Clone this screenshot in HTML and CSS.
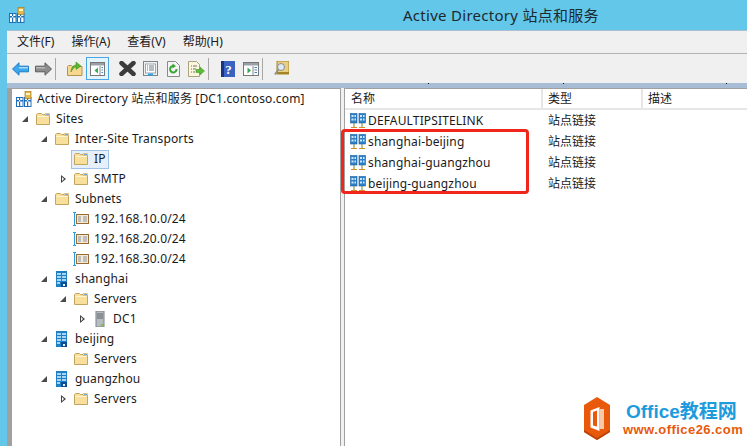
FILE: index.html
```html
<!DOCTYPE html>
<html lang="zh-CN">
<head>
<meta charset="utf-8">
<title>Active Directory 站点和服务</title>
<link rel="stylesheet" href="styles.css">
</head>
<body>
<svg class="defs" width="0" height="0">
  <symbol id="folder" viewBox="0 0 16 16">
    <path d="M1.500 13.500V3.500l1-1h4l1 1h6l1 1v9z" fill="#f9df9c" stroke="#c4a55f"/>
    <path d="M2.500 5.500h11" stroke="#fff4d2"/>
    <path d="M10 2.500h4.500v2H10z" fill="#fdf6df" stroke="#c4a55f" stroke-width=".6"/>
    <path d="M11 3.500h3" stroke="#6aa9dd"/>
  </symbol>
  <symbol id="site" viewBox="0 0 16 16">
    <rect x="2" y="0" width="11" height="16" fill="#1f7fc4"/>
    <path d="M3 2h4v2H3zM8 2h4v2H8zM3 5h4v2H3zM8 5h4v2H8zM3 8h4v2H3zM8 8h4v2H8z" fill="#a6d6f5"/>
    <rect x="7" y="11" width="6" height="5" fill="#0c4e96"/>
    <rect x="3" y="11" width="3" height="2" fill="#a6d6f5"/>
    <rect x="9" y="13" width="2" height="2" fill="#e8f4fc"/>
  </symbol>
  <symbol id="subnet" viewBox="0 0 16 16">
    <path d="M1.500 1v14M0 1.500h3M0 14.500h3" stroke="#2b9be0" fill="none"/>
    <rect x="3.500" y="3.500" width="12" height="9" fill="#f4e9d4" stroke="#9a6a33"/>
    <path d="M5 6h3M5 8h3M5 10h3M10 6h4M10 8h4M10 10h4" stroke="#8793a6"/>
  </symbol>
  <symbol id="server" viewBox="0 0 16 16">
    <rect x="4" y="0" width="8" height="16" fill="#b7bcc1" stroke="#7d8287"/>
    <path d="M5 3h6M5 5h6M5 7h6" stroke="#5f6468"/>
    <rect x="9" y="13" width="2" height="2" fill="#7cc242"/>
  </symbol>
  <symbol id="link" viewBox="0 0 16 16">
    <rect x="0.500" y="0.500" width="6.500" height="9.500" fill="#2d7fc6" stroke="#1c5fa3" stroke-width=".6"/>
    <rect x="9" y="0.500" width="6.500" height="9.500" fill="#2d7fc6" stroke="#1c5fa3" stroke-width=".6"/>
    <path d="M1.500 2h2v2h-2zM4.500 2h1.500v2H4.500zM1.500 5.500h2v2h-2zM4.500 5.500h1.500v2H4.500zM10 2h2v2h-2zM13 2h1.500v2H13zM10 5.500h2v2h-2zM13 5.500h1.500v2H13z" fill="#cfe9fb"/>
    <path d="M4 10v4M12 10v4" stroke="#6c8a2e"/>
    <path d="M1 14.500h6M9 14.500h6" stroke="#d78a22"/>
  </symbol>
  <symbol id="ad" viewBox="0 0 16 16">
    <rect x=".5" y="6.500" width="6.500" height="9" fill="#fff" stroke="#1f6fbe"/>
    <rect x="8.500" y="6.500" width="6.500" height="9" fill="#fff" stroke="#1f6fbe"/>
    <path d="M1 9h6v1.500H1zM9 9h6v1.500H9zM3 7v8h1.200V7zM11 7v8h1.200V7z" fill="#1f6fbe"/>
    <rect x="9" y="0.500" width="6" height="7" fill="#e3b94f" stroke="#a67c21" stroke-width=".7"/>
    <rect x="10" y="2" width="4" height="2" fill="#fff3c4"/>
  </symbol>
</svg>

<div class="titlebar">
  <svg class="title-icon" width="16" height="16"><use href="#ad"/></svg>
  <span class="title-text">Active Directory 站点和服务</span>
</div>

<div class="window">
  <nav class="menubar">
    <span>文件(F)</span><span>操作(A)</span><span>查看(V)</span><span>帮助(H)</span>
  </nav>

  <div class="toolbar">
    <span class="tool"><svg width="17" height="14" viewBox="0 0 17 14"><path d="M.5 7 7 .8v3.400h9.500v5.600H7v3.400z" fill="#3ea6ec" stroke="#1d7cc4"/><path d="M7 5h9v1.500H7z" fill="#a5dcfa"/></svg></span>
    <span class="tool"><svg width="17" height="14" viewBox="0 0 17 14"><path d="M16.500 7 10 .8v3.400H.5v5.600H10v3.400z" fill="#8c8c8c" stroke="#5c5c5c"/><path d="M1 5h9v1.500H1z" fill="#b8b8b8"/></svg></span>
    <span class="sep"></span>
    <span class="tool"><svg width="16" height="15" viewBox="0 0 16 15"><path d="M.5 14.500V5.500l1-1h3l1 1h9.500v9z" fill="#f6d98f" stroke="#b5934a"/><path d="M4 11C4 6 7 4 9 4V1l5 4-5 3.500V6C7 6 5.500 8 4 11z" fill="#58b52f" stroke="#3a8a1c" stroke-width=".5"/></svg></span>
    <span class="tool active"><svg width="15" height="14" viewBox="0 0 15 14"><rect x=".5" y=".5" width="14" height="13" fill="#fff" stroke="#777"/><path d="M1 1h13v2.500H1z" fill="#9aa0a6"/><path d="M10 4v9" stroke="#888"/><path d="M11.500 5.500h1.500M11.500 8h1.500M11.500 10.500h1.500" stroke="#3d7fc4"/><path d="M8 5.500v6L4.500 8.500z" fill="#35a853"/></svg></span>
    <span class="tool gap"><svg width="17" height="15" viewBox="0 0 17 15"><path d="M2.500 2 14.500 13M14.500 2 2.500 13" stroke="#3c3c3c" stroke-width="4.500" stroke-linecap="round"/></svg></span>
    <span class="tool"><svg width="15" height="15" viewBox="0 0 15 15"><rect x=".5" y=".5" width="14" height="14" fill="#eef1f4" stroke="#7e8388"/><rect x="2.500" y="3" width="10" height="9" fill="#fff" stroke="#a0a5aa"/><path d="M4 5h1M6 5h5M4 7h1M6 7h5M4 9h1M6 9h5" stroke="#6b7b8c"/><path d="M5 13.500h5" stroke="#2ba3e6" stroke-width="2"/></svg></span>
    <span class="tool"><svg width="13" height="16" viewBox="0 0 13 16"><path d="M.5.5h8l4 4v11H.5z" fill="#f5f5f5" stroke="#8a8a8a"/><path d="M9.500 8A3.200 3.200 0 1 1 6.500 5" fill="none" stroke="#3aa537" stroke-width="2"/><path d="M5.500 2.500 9 5 5.500 7.500z" fill="#3aa537"/></svg></span>
    <span class="tool"><svg width="17" height="16" viewBox="0 0 17 16"><path d="M.5.5h8l3 3v12H.5z" fill="#fbf6dd" stroke="#a9a27c"/><path d="M3 5h1M5 5h4M3 8h1M5 8h3M3 11h1M5 11h2" stroke="#6e6e6e"/><path d="M8 8.500h4V6l4.500 4-4.500 4v-2.500H8z" fill="#5cbb3a" stroke="#3d8e22" stroke-width=".5"/></svg></span>
    <span class="sep"></span>
    <span class="tool"><svg width="14" height="16" viewBox="0 0 14 16"><rect width="14" height="16" fill="#3a62c0"/><rect x="0" y="0" width="3" height="16" fill="#1a3580"/><text x="7.500" y="13" class="help-mark">?</text></svg></span>
    <span class="tool"><svg width="16" height="14" viewBox="0 0 16 14"><rect x=".5" y=".5" width="15" height="13" fill="#fff" stroke="#777"/><path d="M1 1h14v2.500H1z" fill="#9aa0a6"/><path d="M10 4v9" stroke="#888"/><path d="M11.500 5.500h2.500M11.500 8h2.500M11.500 10.500h2.500" stroke="#3d7fc4"/><path d="M4.500 5.500v6L8 8.500z" fill="#35a853"/></svg></span>
    <span class="sep"></span>
    <span class="tool"><svg width="15" height="15" viewBox="0 0 15 15"><rect x="3" y="0" width="12" height="13" fill="#e9cf83" stroke="#a58428"/><rect x="3" y="11" width="12" height="2" fill="#a58428"/><circle cx="7" cy="6" r="3.500" fill="#dfeaf2" stroke="#8c8c8c"/><path d="M4.500 8.500.8 13.500" stroke="#8c8c8c" stroke-width="1.600"/></svg></span>
  </div>

  <div class="band"></div>

  <div class="panes">
    <div class="tree">
      <div class="row l0"><svg class="ico"><use href="#ad"/></svg><span>Active Directory 站点和服务 [DC1.contoso.com]</span></div>
      <div class="row l1"><i class="arrow open"></i><svg class="ico"><use href="#folder"/></svg><span>Sites</span></div>
      <div class="row l2"><i class="arrow open"></i><svg class="ico"><use href="#folder"/></svg><span>Inter-Site Transports</span></div>
      <div class="row l3"><i class="arrow"></i><span class="sel"><svg class="ico"><use href="#folder"/></svg><span>IP</span></span></div>
      <div class="row l3"><i class="arrow closed"></i><svg class="ico"><use href="#folder"/></svg><span>SMTP</span></div>
      <div class="row l2"><i class="arrow open"></i><svg class="ico"><use href="#folder"/></svg><span>Subnets</span></div>
      <div class="row l3"><i class="arrow"></i><svg class="ico"><use href="#subnet"/></svg><span>192.168.10.0/24</span></div>
      <div class="row l3"><i class="arrow"></i><svg class="ico"><use href="#subnet"/></svg><span>192.168.20.0/24</span></div>
      <div class="row l3"><i class="arrow"></i><svg class="ico"><use href="#subnet"/></svg><span>192.168.30.0/24</span></div>
      <div class="row l2"><i class="arrow open"></i><svg class="ico"><use href="#site"/></svg><span>shanghai</span></div>
      <div class="row l3"><i class="arrow open"></i><svg class="ico"><use href="#folder"/></svg><span>Servers</span></div>
      <div class="row l4"><i class="arrow closed"></i><svg class="ico"><use href="#server"/></svg><span>DC1</span></div>
      <div class="row l2"><i class="arrow open"></i><svg class="ico"><use href="#site"/></svg><span>beijing</span></div>
      <div class="row l3"><i class="arrow"></i><svg class="ico"><use href="#folder"/></svg><span>Servers</span></div>
      <div class="row l2"><i class="arrow open"></i><svg class="ico"><use href="#site"/></svg><span>guangzhou</span></div>
      <div class="row l3"><i class="arrow closed"></i><svg class="ico"><use href="#folder"/></svg><span>Servers</span></div>
    </div>

    <div class="list">
      <div class="list-head">
        <span class="col-name">名称</span><span class="col-type">类型</span><span class="col-desc">描述</span>
      </div>
      <div class="list-row"><span class="col-name"><svg class="ico"><use href="#link"/></svg>DEFAULTIPSITELINK</span><span class="col-type">站点链接</span></div>
      <div class="list-row"><span class="col-name"><svg class="ico"><use href="#link"/></svg>shanghai-beijing</span><span class="col-type">站点链接</span></div>
      <div class="list-row"><span class="col-name"><svg class="ico"><use href="#link"/></svg>shanghai-guangzhou</span><span class="col-type">站点链接</span></div>
      <div class="list-row"><span class="col-name"><svg class="ico"><use href="#link"/></svg>beijing-guangzhou</span><span class="col-type">站点链接</span></div>
      <div class="highlight"></div>
    </div>
  </div>
</div>

<div class="watermark">
  <svg class="wm-logo" width="26" height="43" viewBox="0 0 26 43">
    <path d="M13 0 26 8v27l-13 8L0 35V8z" fill="#e8590c"/>
    <path d="M26 35l-13 8L0 35v-2l13 8 13-8z" fill="#b8430a"/>
    <path d="M6.500 13.500 15.500 10v24l-9-3.500z M9 15v13.500l4 1V13.500z" fill="#fff" fill-rule="evenodd"/>
    <path d="M15.500 12h4.500v20h-4.500z" fill="#f9c8a6"/>
  </svg>
  <div class="wm-text">
    <span class="wm-main">Office教程网</span>
    <span class="wm-url">www.office26.com</span>
  </div>
</div>
</body>
</html>
```

FILE: styles.css
```css
* { box-sizing: border-box; }
html, body { margin: 0; height: 100%; }
body {
  position: relative;
  width: 747px;
  height: 446px;
  overflow: hidden;
  background: #63c7ea;
  font: 12px/20px "Noto Sans", "Noto Sans CJK SC", sans-serif;
  color: #1a1a1a;
  display: flex;
  flex-direction: column;
}
.defs { position: absolute; }
svg { display: block; flex: none; }

.titlebar {
  height: 30px;
  flex: none;
  display: flex;
  align-items: center;
  padding-left: 9px;
}
.title-icon { margin-right: 378px; margin-top: 0; }
.title-text { font-size: 15px; color: #1c2a30; margin-top: -1px; white-space: nowrap; letter-spacing: .28px; }

.window {
  flex: 1;
  margin-left: 7px;
  display: flex;
  flex-direction: column;
  background: #f0f0f0;
  min-height: 0;
}
.menubar {
  height: 24px;
  flex: none;
  display: flex;
  gap: 17px;
  align-items: center;
  padding-left: 10px;
  border-top: 1px solid #a8c0d0;
  border-bottom: 1px solid #b4b4b4;
}
.toolbar {
  height: 29px;
  flex: none;
  display: flex;
  align-items: center;
  padding-left: 2px;
}
.tool {
  width: 23px;
  height: 23px;
  flex: none;
  display: flex;
  align-items: center;
  justify-content: center;
}
.tool.active {
  background: #e5f3fb;
  border: 1px solid #48a6e6;
}
.tool.gap { margin-left: 7px; }
.sep {
  width: 1px;
  height: 22px;
  flex: none;
  margin-right: 7px;
  background: #a8a8a8;
}
.help-mark { font: bold 13px "Liberation Serif", serif; fill: #fff; text-anchor: middle; }

.band {
  height: 5px;
  flex: none;
  background:
    linear-gradient(#1a1a1a, #1a1a1a) 421px 0 / 1px 1px no-repeat,
    linear-gradient(#1a1a1a, #1a1a1a) 556px 0 / 1px 1px no-repeat,
    linear-gradient(#1a1a1a, #1a1a1a) 719px 0 / 1px 1px no-repeat,
    #a9bcd6;
}
.panes {
  flex: 1;
  display: flex;
  min-height: 0;
  border-left: 5px solid #a0a0a0;
  background: #f0f0f0;
}
.tree {
  width: 329px;
  flex: none;
  background: #fff;
  border-top: 1px solid #a0a0a0;
  border-right: 1px solid #a0a0a0;
  letter-spacing: .15px;
}
.row {
  height: 20px;
  display: flex;
  align-items: center;
  gap: 5px;
  white-space: nowrap;
}
.ico { width: 16px; height: 16px; }
.row > .arrow { width: 8px; height: 20px; flex: none; position: relative; }
.arrow.open::before {
  content: "";
  position: absolute;
  left: 0;
  top: 7px;
  border-style: solid;
  border-width: 0 0 6px 6px;
  border-color: transparent transparent #4a4a4a transparent;
}
.arrow.closed::before {
  content: "";
  position: absolute;
  left: 1px;
  top: 6px;
  width: 0;
  height: 0;
  border-style: solid;
  border-width: 4px 0 4px 5px;
  border-color: transparent transparent transparent #444;
}
.arrow.closed::after {
  content: "";
  position: absolute;
  left: 2px;
  top: 8px;
  border-style: solid;
  border-width: 2px 0 2px 2.500px;
  border-color: transparent transparent transparent #fff;
}
.l0 { padding-left: 4px; }
.l1 { padding-left: 10px; }
.l2 { padding-left: 29px; }
.l3 { padding-left: 48px; }
.l4 { padding-left: 67px; }
.sel {
  display: flex;
  align-items: center;
  gap: 5px;
  height: 19px;
  margin-left: -2px;
  padding: 0 3px 0 1px;
  width: 38px;
  background: #e6f0fa;
  border: 1px solid #9fc3e6;
}

.list {
  position: relative;
  flex: 1;
  margin-left: 3px;
  background: #fff;
  border-left: 1px solid #a0a0a0;
  border-top: 1px solid #a0a0a0;
}
.list-head {
  height: 21px;
  display: flex;
  background: #fff;
  border-bottom: 2px solid #e6e6e6;
}
.list-head span + span { border-left: 2px solid #e6e6e6; }
.col-name {
  width: 196px;
  padding-left: 6px;
  display: flex;
  align-items: center;
  flex: none;
}
.col-type {
  width: 100px;
  padding-left: 5px;
  flex: none;
}
.col-desc { padding-left: 5px; flex: 1; }
.list-row {
  height: 21px;
  display: flex;
  align-items: center;
  white-space: nowrap;
}
.list-row .col-name { padding-left: 5px; gap: 2px; letter-spacing: .15px; }
.list-row .col-type { padding-left: 7px; }
.highlight {
  position: absolute;
  left: -4px;
  top: 40px;
  width: 188px;
  height: 65px;
  border: 3px solid #f0251c;
  border-radius: 4px;
}

.watermark {
  position: absolute;
  left: 584px;
  top: 397px;
  display: flex;
  gap: 16px;
}
.wm-text { display: flex; flex-direction: column; margin-top: 3px; }
.wm-main {
  font: bold 19px/23px "Liberation Sans", "Noto Sans CJK SC", sans-serif;
  color: #1d9bdc;
  white-space: nowrap;
}
.wm-url {
  font: bold 13px/13px "Liberation Sans", sans-serif;
  color: #e8590c;
  margin-left: -3px;
  letter-spacing: .45px;
  white-space: nowrap;
}
```
